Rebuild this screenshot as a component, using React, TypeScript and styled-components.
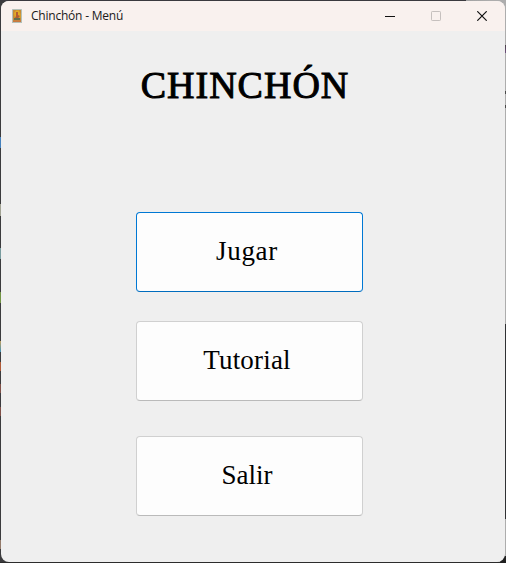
import React from 'react';
import styled, { createGlobalStyle } from 'styled-components';

const GlobalStyle = createGlobalStyle`
  * { box-sizing: border-box; }
  body { margin: 0; overflow: hidden; }
`;

const Desktop = styled.div`
  width: 506px;
  height: 563px;
  padding: 1px;
  background:
    linear-gradient(#3a393e, #3a393e) 0 0 / 466px 1px no-repeat,
    linear-gradient(#4581bd, #4581bd) 0 137px / 1px 11px no-repeat,
    linear-gradient(#a2a393, #a2a393) 0 204px / 1px 12px no-repeat,
    linear-gradient(#789b9e, #789b9e) 0 248px / 1px 11px no-repeat,
    linear-gradient(#719344, #719344) 0 292px / 1px 11px no-repeat,
    linear-gradient(#c0a060, #4190b5) 0 341px / 1px 11px no-repeat,
    linear-gradient(#b05a38, #b05a38) 0 362px / 1px 9px no-repeat,
    linear-gradient(#805048, #805048) 0 384px / 1px 9px no-repeat,
    linear-gradient(#805048, #805048) 0 407px / 1px 9px no-repeat,
    linear-gradient(#937a6a, #937a6a) 0 540px / 1px 9px no-repeat,
    linear-gradient(#464046, #705080) 505px 45px / 1px 8px no-repeat,
    linear-gradient(#4a4a4a, #4a4a4a) 505px 91px / 1px 3px no-repeat,
    linear-gradient(#4a4a4a, #4a4a4a) 505px 105px / 1px 3px no-repeat,
    linear-gradient(#303133, #303133) 505px 324px / 1px 195px no-repeat,
    linear-gradient(#202020, #202020) 500px 556px / 6px 7px no-repeat,
    linear-gradient(#2c2c2c, #2c2c2c) 0 562px / 506px 1px no-repeat,
    linear-gradient(90deg, #3b3b3d 250px, #adadad 490px);
`;

const Window = styled.main`
  display: flex;
  flex-direction: column;
  width: 504px;
  height: 561px;
  overflow: hidden;
  border-radius: 8px;
  background: #efefef;
`;

const TitleBar = styled.header`
  display: flex;
  flex: 0 0 30px;
  align-items: center;
  background: #f9f1ee;
  padding-left: 11px;
`;

const AppIcon = styled.svg`
  flex: none;
  width: 10px;
  height: 14px;
`;

const WindowTitle = styled.span`
  flex: 1;
  margin-left: 9px;
  font: 12px/16px "Open Sans", "Noto Sans", sans-serif;
  letter-spacing: -0.22px;
  color: #1b1a1a;
  white-space: nowrap;
`;

const WindowControl = styled.button<{ $muted?: boolean }>`
  width: 46px;
  height: 30px;
  padding: 0;
  border: 0;
  background: none;
  color: ${({ $muted }) => ($muted ? '#c6c0be' : '#111')};
  svg { display: block; margin: 0 auto; }
`;

const Controls = styled.div`
  display: flex;
  width: 138px;
  height: 30px;
`;

const Menu = styled.section`
  display: flex;
  flex-direction: column;
  align-items: center;
  padding-right: 7px;
`;

const Heading = styled.h1`
  margin: 32px 9px 0 0;
  height: 44px;
  font: 400 38px/44px "Liberation Serif", serif;
  letter-spacing: 1px;
  -webkit-text-stroke: 1px #000;
  color: #000;
`;

const MenuButton = styled.button<{ $top: number; $focused?: boolean; $spacing?: number }>`
  width: 227px;
  height: 80px;
  margin-top: ${({ $top }) => $top}px;
  padding: 0 5px 2px 0;
  border: 1px solid ${({ $focused }) => ($focused ? '#0078d4' : '#d0d0d0')};
  border-bottom-color: ${({ $focused }) => ($focused ? '#006cbe' : '#bababa')};
  border-radius: 4px;
  background: #fdfdfd;
  color: #000;
  font: 27px/32px "Liberation Serif", serif;
  letter-spacing: ${({ $spacing = 0 }) => $spacing}px;
`;

export default function App() {
  return (
    <>
      <GlobalStyle />
      <Desktop>
        <Window>
          <TitleBar>
            <AppIcon viewBox="0 0 10 14">
              <rect width="10" height="14" rx="0.6" fill="#b4c0b8" />
              <rect x="1" y="1" width="8" height="12" fill="#c58b38" />
              <path d="M2 4 4 1.6h3L8.5 5v4L6 8 3 9Z" fill="#e2aa24" />
              <path d="M4 3h2v3l2 1-2 2H3l1-2Z" fill="#b35b32" />
              <path d="M2 9h6v2H2Z" fill="#65704b" />
              <path d="M1 11.5h8V13H1Z" fill="#c97842" />
            </AppIcon>
            <WindowTitle>Chinchón - Menú</WindowTitle>
            <Controls>
              <WindowControl aria-label="Minimizar">
                <svg width="10" height="10"><path d="M0 5.5h10" stroke="currentColor" /></svg>
              </WindowControl>
              <WindowControl aria-label="Maximizar" $muted disabled>
                <svg width="10" height="10"><rect x=".5" y=".5" width="9" height="9" rx=".7" fill="none" stroke="currentColor" /></svg>
              </WindowControl>
              <WindowControl aria-label="Cerrar">
                <svg width="10" height="10"><path d="m.3.3 9.4 9.4m0-9.4L.3 9.7" stroke="currentColor" strokeWidth="1.2" /></svg>
              </WindowControl>
            </Controls>
          </TitleBar>
          <Menu>
            <Heading>CHINCHÓN</Heading>
            <MenuButton $top={105} $focused $spacing={0.7}>Jugar</MenuButton>
            <MenuButton $top={29} $spacing={0.2}>Tutorial</MenuButton>
            <MenuButton $top={35}>Salir</MenuButton>
          </Menu>
        </Window>
      </Desktop>
    </>
  );
}
